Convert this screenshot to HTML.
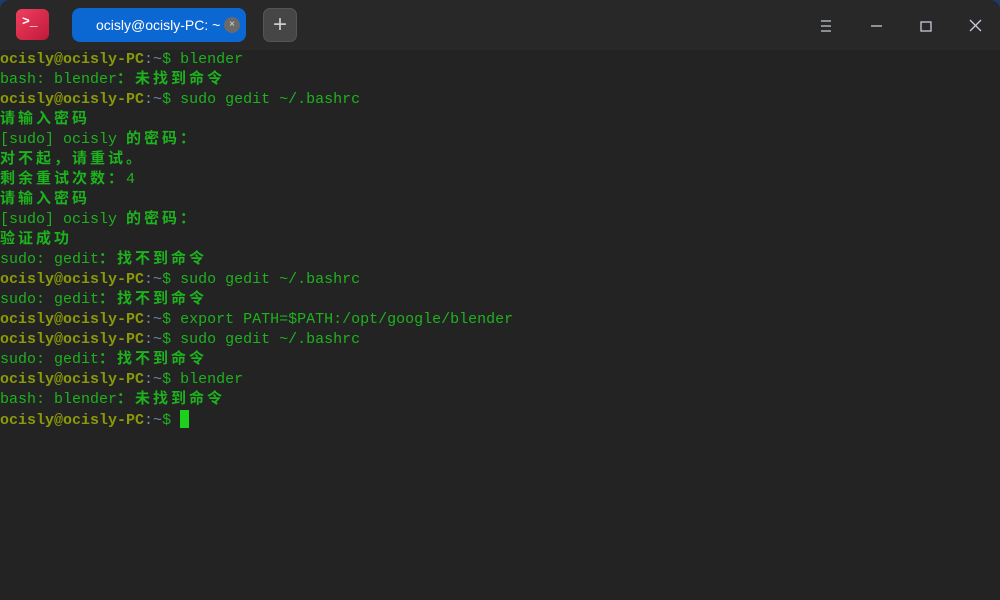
<!DOCTYPE html>
<html><head><meta charset="utf-8"><style>
html,body{margin:0;padding:0;width:1000px;height:600px;overflow:hidden;background:#1f3a6e}
.win{position:absolute;left:0;top:0;width:1000px;height:600px;background:#232323;border-radius:10px 10px 0 0;overflow:hidden}
.bar{position:absolute;left:0;top:0;width:1000px;height:50px;background:#282828}
.logo{position:absolute;left:16px;top:9px;width:33px;height:31px;border-radius:6px;background:linear-gradient(135deg,#f04060,#c0183a);color:#fff;font:bold 13px "Liberation Mono",monospace;}
.logo span{position:absolute;left:6px;top:5px}
.tab{position:absolute;left:72px;top:8px;width:174px;height:34px;background:#0b67d2;border-radius:8px;color:#fff;font:14px "Liberation Sans",sans-serif;line-height:34px;overflow:hidden}
.tab .t{position:absolute;left:24px;white-space:nowrap}
.tab .x{position:absolute;left:152px;top:9px;width:16px;height:16px;border-radius:50%;background:#6a6a6a;color:#ddd;font-size:10px;line-height:16px;text-align:center}
.plus{position:absolute;left:263px;top:8px;width:34px;height:34px;border-radius:7px;background:#464646;border:1px solid #555;box-sizing:border-box;color:#ccc;font:24px "Liberation Sans",sans-serif;text-align:center;line-height:32px}
.term{position:absolute;left:0;top:50px;font:15px "Liberation Mono","Noto Sans CJK SC",monospace;color:#1db31d}
.l{height:20px;line-height:20px;white-space:pre}
.u{color:#8a9a08;font-weight:bold}.c{color:#7a8a9a}.h{color:#6a88b0}
.z{font-weight:bold;letter-spacing:3px}
.cur{display:inline-block;width:9px;height:18px;background:#1ed01e;vertical-align:-4px}
</style></head><body><div class="win">
<div class="bar"></div>
<div class="logo"><span>&gt;_</span></div>
<div class="tab"><span class="t">ocisly@ocisly-PC: ~</span><span class="x">×</span></div>
<div class="plus">+</div>
<svg style="position:absolute;left:800px;top:0" width="200" height="50" stroke="#c8cad8" stroke-width="1.3" fill="none">
<path d="M21 21h10M21 26h10M21 31h10"/><path d="M71 26h11"/><rect x="121" y="22" width="10" height="9"/><path d="M170 20l11 11M181 20l-11 11"/></svg>
<div class="term"><div class="l"><span class="u">ocisly@ocisly-PC</span><span class="c">:</span><span class="h">~</span>$ blender</div><div class="l">bash: blender<span class="z">：未找到命令</span></div><div class="l"><span class="u">ocisly@ocisly-PC</span><span class="c">:</span><span class="h">~</span>$ sudo gedit ~/.bashrc</div><div class="l"><span class="z">请输入密码</span></div><div class="l">[sudo] ocisly <span class="z">的密码：</span></div><div class="l"><span class="z">对不起，请重试。</span></div><div class="l"><span class="z">剩余重试次数：</span>4</div><div class="l"><span class="z">请输入密码</span></div><div class="l">[sudo] ocisly <span class="z">的密码：</span></div><div class="l"><span class="z">验证成功</span></div><div class="l">sudo: gedit<span class="z">：找不到命令</span></div><div class="l"><span class="u">ocisly@ocisly-PC</span><span class="c">:</span><span class="h">~</span>$ sudo gedit ~/.bashrc</div><div class="l">sudo: gedit<span class="z">：找不到命令</span></div><div class="l"><span class="u">ocisly@ocisly-PC</span><span class="c">:</span><span class="h">~</span>$ export PATH=$PATH:/opt/google/blender</div><div class="l"><span class="u">ocisly@ocisly-PC</span><span class="c">:</span><span class="h">~</span>$ sudo gedit ~/.bashrc</div><div class="l">sudo: gedit<span class="z">：找不到命令</span></div><div class="l"><span class="u">ocisly@ocisly-PC</span><span class="c">:</span><span class="h">~</span>$ blender</div><div class="l">bash: blender<span class="z">：未找到命令</span></div><div class="l"><span class="u">ocisly@ocisly-PC</span><span class="c">:</span><span class="h">~</span>$ <span class="cur"></span></div></div>
</div></body></html>
